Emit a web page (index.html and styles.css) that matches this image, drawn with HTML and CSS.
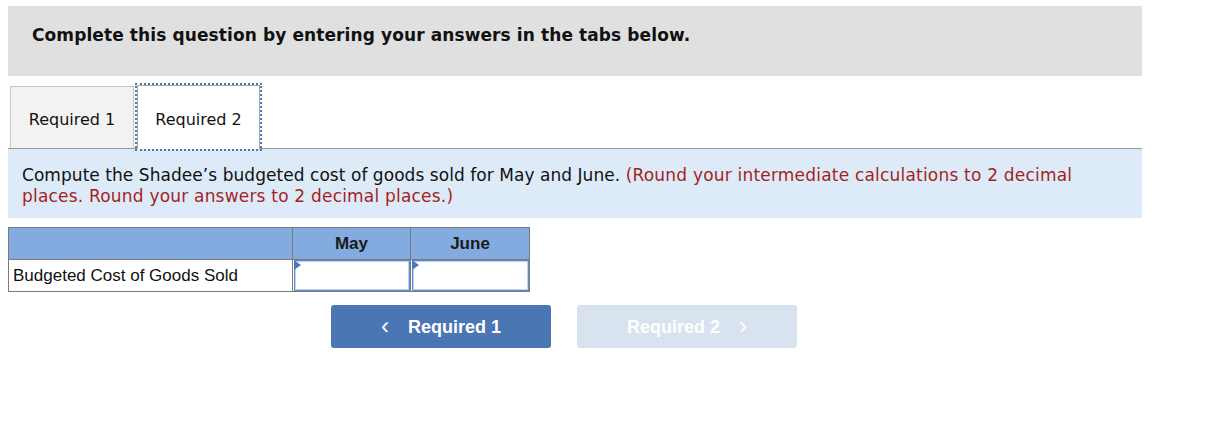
FILE: index.html
```html
<!DOCTYPE html>
<html>
<head>
<meta charset="utf-8">
<link rel="stylesheet" href="styles.css">
</head>
<body>
<div class="page">
  <div class="banner">Complete this question by entering your answers in the tabs below.</div>
  <div class="tabs">
    <div class="tab tab-inactive">Required 1</div>
    <div class="tab tab-active">Required 2</div>
  </div>
  <div class="instructions">
    Compute the Shadee’s budgeted cost of goods sold for May and June. <span class="note">(Round your intermediate calculations to 2 decimal places. Round your answers to 2 decimal places.)</span>
  </div>
  <table class="grid">
    <colgroup>
      <col class="w-label">
      <col class="w-may">
      <col class="w-june">
    </colgroup>
    <tr class="head">
      <th class="c-label"></th>
      <th class="c-num">May</th>
      <th class="c-num">June</th>
    </tr>
    <tr class="row">
      <td class="c-label">Budgeted Cost of Goods Sold</td>
      <td class="c-input"><div class="field"><span class="flag"></span></div></td>
      <td class="c-input"><div class="field"><span class="flag"></span></div></td>
    </tr>
  </table>
  <div class="nav">
    <button class="btn btn-prev"><span class="chev">&lsaquo;</span>Required 1</button>
    <button class="btn btn-next">Required 2<span class="chev">&rsaquo;</span></button>
  </div>
</div>
</body>
</html>
```
FILE: styles.css
```css
html, body {
  margin: 0;
  padding: 0;
  background: #ffffff;
}
body {
  padding: 6px 8px;
  font-family: "DejaVu Sans", Verdana, sans-serif;
  color: #000;
}
.page {
  width: 1134px;
}
.banner {
  box-sizing: border-box;
  height: 70px;
  background: #e0e0e0;
  padding: 18px 24px 0;
  font-weight: bold;
  font-size: 17px;
  letter-spacing: 0.1px;
  line-height: 23px;
  color: #111;
}
.tabs {
  display: flex;
  align-items: flex-end;
  gap: 3px;
  margin-top: 9px;
  padding-left: 2px;
  height: 63px;
  border-bottom: 1px solid #9a9a9a;
}
.tab {
  box-sizing: border-box;
  display: flex;
  align-items: center;
  justify-content: center;
  font-size: 16px;
  color: #111;
  padding-top: 4px;
}
.tab-inactive {
  width: 124px;
  height: 62px;
  background: #f2f2f2;
  border: 1px solid #c6c6c6;
  border-bottom: none;
}
.tab-active {
  width: 123px;
  height: 64px;
  margin-bottom: -1px;
  background: #ffffff;
  border: 1px solid #a9a9a9;
  border-bottom: none;
  outline: 2px dotted #4a76b3;
  outline-offset: 0;
}
.instructions {
  box-sizing: border-box;
  height: 69px;
  background: #ddebf8;
  padding: 16px 44px 0 14px;
  font-size: 17px;
  line-height: 21px;
  letter-spacing: 0.05px;
  color: #111;
}
.note {
  color: #a51f1f;
  letter-spacing: 0.2px;
}
.grid {
  margin-top: 9px;
  border-collapse: collapse;
  table-layout: fixed;
  width: 521px;
  font-family: "Liberation Sans", Arial, sans-serif;
  font-size: 17px;
  color: #111;
}
.w-label { width: 284px; }
.w-may { width: 118px; }
.w-june { width: 119px; }
.grid th, .grid td {
  border: 1px solid #7a7a7a;
  padding: 0;
}
.head {
  height: 32px;
  background: #84abdf;
}
.head th {
  font-weight: bold;
  vertical-align: top;
  padding-top: 6px;
  color: #1a1a1a;
}
.row {
  height: 32px;
}
.c-label {
  padding-left: 4px !important;
  text-align: left;
}
.c-input {
  padding: 0 !important;
}
.field {
  position: relative;
  box-sizing: border-box;
  height: 31px;
  margin: 0 0 0 1px;
  border: 1px solid #5e8dcb;
  box-shadow: inset 0 0 0 1px #bcd3ef;
  background: #fff;
}
.flag {
  position: absolute;
  left: -1px;
  top: -1px;
  width: 0;
  height: 0;
  border-top: 5px solid transparent;
  border-bottom: 5px solid transparent;
  border-left: 7px solid #4a78c0;
}
.nav {
  display: flex;
  gap: 26px;
  margin-top: 13px;
  padding-left: 323px;
}
.btn {
  box-sizing: border-box;
  width: 220px;
  height: 43px;
  border: none;
  border-radius: 3px;
  font-family: "Liberation Sans", Arial, sans-serif;
  font-weight: bold;
  font-size: 18px;
  color: #fff;
  display: flex;
  align-items: center;
  justify-content: center;
  padding-top: 2px;
}
.btn-prev {
  background: #4a76b4;
}
.btn-next {
  background: #d9e3ef;
}
.chev {
  font-size: 24px;
  font-weight: normal;
  line-height: 1;
  margin-top: -3px;
}
.btn-prev .chev {
  margin-right: 19px;
}
.btn-next .chev {
  margin-left: 19px;
}
```
